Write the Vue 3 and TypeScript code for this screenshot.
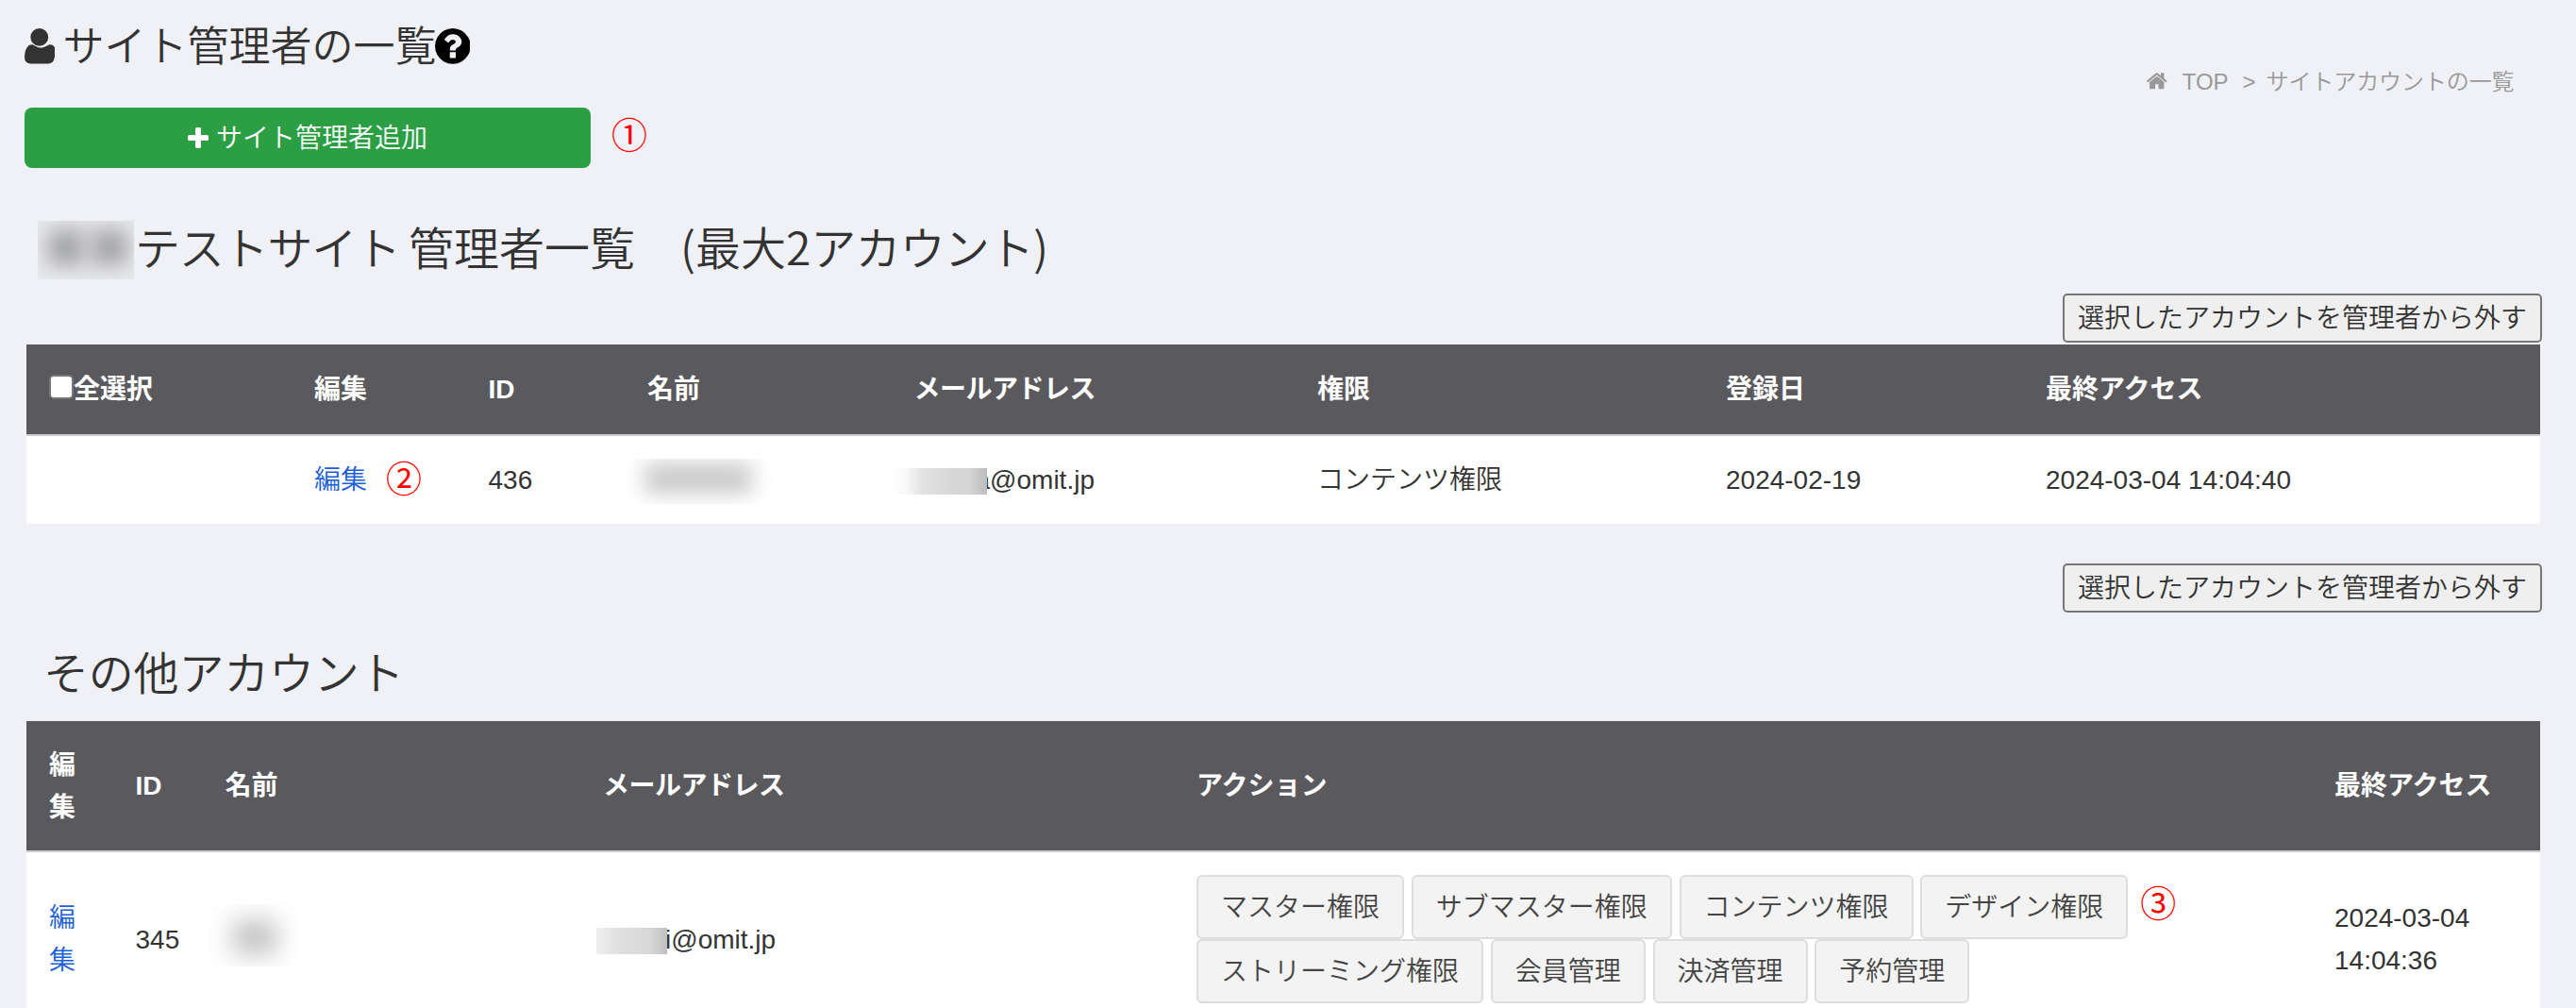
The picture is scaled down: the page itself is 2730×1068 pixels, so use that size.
<script setup lang="ts">
interface Account {
  id: number
  mailTail: string
  lastAccess: string
}

const adminHeads: string[] = ['編集', 'ID', '名前', 'メールアドレス', '権限', '登録日', '最終アクセス']
const adminCols: number[] = [281, 184.5, 168.5, 282.5, 427.5, 433, 339, 548]

const otherHeads: string[] = ['編集', 'ID', '名前', 'メールアドレス', 'アクション', '最終アクセス']
const otherCols: number[] = [91.5, 95, 400.5, 629, 1206, 242]

const admin: Account & { role: string; registered: string } = {
  id: 436,
  mailTail: 'a@omit.jp',
  role: 'コンテンツ権限',
  registered: '2024-02-19',
  lastAccess: '2024-03-04 14:04:40',
}

const other: Account = { id: 345, mailTail: 'i@omit.jp', lastAccess: '2024-03-04 14:04:36' }

const actionRows: string[][] = [
  ['マスター権限', 'サブマスター権限', 'コンテンツ権限', 'デザイン権限'],
  ['ストリーミング権限', '会員管理', '決済管理', '予約管理'],
]
</script>

<template>
  <main class="page">
    <header class="top">
      <h1 class="title">
        <svg class="ic-user" viewBox="0 0 1280 1536" aria-hidden="true">
          <path d="M1280 1271q0 120-73 189.500t-194 69.500h-746q-121 0-194-69.500t-73-189.500q0-53 3.500-103.500t14-109 26.500-108.500 43-97.500 62-81 85.500-53.500 111.500-20q9 0 42 21.500t74.500 48 108 48 133.500 21.500 133.500-21.500 108-48 74.500-48 42-21.500q61 0 111.500 20t85.500 53.500 62 81 43 97.500 26.500 108.500 14 109 3.500 103.500zM1024 384q0 159-112.500 271.500t-271.500 112.500-271.500-112.500-112.500-271.500 112.500-271.500 271.500-112.500 271.500 112.500 112.500 271.500z" />
        </svg>
        <span>サイト管理者の一覧</span>
        <svg class="ic-help" viewBox="0 0 1536 1536" aria-hidden="true">
          <path d="M896 1248v-192q0-14-9-23t-23-9h-192q-14 0-23 9t-9 23v192q0 14 9 23t23 9h192q14 0 23-9t9-23zM1152 576q0-88-55.500-163t-138.500-116-170-41q-243 0-371 213-15 24 8 42l132 100q7 6 19 6 16 0 25-12 53-68 86-92 34-24 86-24 48 0 85.500 26t37.500 59q0 38-20 61t-68 45q-63 28-115.500 86.500t-52.500 125.500v36q0 14 9 23t23 9h192q14 0 23-9t9-23q0-19 21.500-49.500t54.500-49.500q32-18 49-28.500t46-35 44.500-48 28-60.500 12.500-81zM1536 768q0 209-103 385.500t-279.500 279.500-385.500 103-385.500-103-279.500-279.500-103-385.500 103-385.500 279.500-279.500 385.500-103 385.500 103 279.500 279.500 103 385.500z" />
        </svg>
      </h1>
      <nav class="crumbs">
        <svg class="ic-home" viewBox="0 0 1612 1283" aria-hidden="true">
          <path d="M1382 739v480q0 26-19 45t-45 19h-384v-384h-256v384h-384q-26 0-45-19t-19-45v-480q0-1 .5-3t.5-3l575-474 575 474q1 2 1 6zM1605 670l-62 74q-8 9-21 11h-3q-13 0-21-7l-692-577-692 577q-12 8-24 7-13-2-21-11l-62-74q-8-10-7-23.500t11-21.500l719-599q32-26 76-26t76 26l244 204v-195q0-14 9-23t23-9h192q14 0 23 9t9 23v408l219 182q10 8 11 21.500t-7 23.500z" />
        </svg>
        <span class="crumb-top">TOP</span>
        <span class="crumb-sep">&gt;</span>
        <span>サイトアカウントの一覧</span>
      </nav>
    </header>

    <div class="add-row">
      <button class="add" type="button">
        <svg class="ic-plus" viewBox="0 0 1408 1408" aria-hidden="true">
          <path d="M1408 608v192q0 40-28 68t-68 28h-416v416q0 40-28 68t-68 28h-192q-40 0-68-28t-28-68v-416h-416q-40 0-68-28t-28-68v-192q0-40 28-68t68-28h416v-416q0-40 28-68t68-28h192q40 0 68 28t28 68v416h416q40 0 68 28t28 68z" />
        </svg>
        <span class="add-label">サイト管理者追加</span>
      </button>
      <span class="mark">①</span>
    </div>

    <h2 class="heading heading-admin">
      <span class="mask mask-site"></span>
      <span class="site-name">テストサイト</span>
      <span class="heading-text">管理者一覧　(最大2<span class="tight">アカウント</span>)</span>
    </h2>

    <div class="remove-row"><button class="remove" type="button">選択したアカウントを管理者から外す</button></div>

    <table class="grid">
      <colgroup><col v-for="(w, i) in adminCols" :key="i" :style="{ width: w + 'px' }" /></colgroup>
      <thead>
        <tr class="head-admin">
          <th><label class="check-all"><span class="box"></span>全選択</label></th>
          <th v-for="h in adminHeads" :key="h" :class="{ kana: h === 'メールアドレス' }">{{ h }}</th>
        </tr>
      </thead>
      <tbody>
        <tr class="row-admin">
          <td></td>
          <td><div class="edit-cell"><a>編集</a><span class="mark">②</span></div></td>
          <td>{{ admin.id }}</td>
          <td><span class="mask mask-name"></span></td>
          <td><div class="mail"><span class="mail-pad-a"></span>{{ admin.mailTail }}<span class="mask mask-mail-a"></span></div></td>
          <td>{{ admin.role }}</td>
          <td>{{ admin.registered }}</td>
          <td>{{ admin.lastAccess }}</td>
        </tr>
      </tbody>
    </table>

    <div class="remove-row second"><button class="remove" type="button">選択したアカウントを管理者から外す</button></div>

    <h2 class="heading heading-other"><span class="heading-text">その他アカウント</span></h2>

    <table class="grid">
      <colgroup><col v-for="(w, i) in otherCols" :key="i" :style="{ width: w + 'px' }" /></colgroup>
      <thead>
        <tr class="head-other">
          <th v-for="h in otherHeads" :key="h" :class="{ kana: h === 'メールアドレス' }">{{ h }}</th>
        </tr>
      </thead>
      <tbody>
        <tr class="row-other">
          <td><a>編集</a></td>
          <td>{{ other.id }}</td>
          <td><span class="mask mask-name-b"></span></td>
          <td><div class="mail"><span class="mail-pad-b"></span>{{ other.mailTail }}<span class="mask mask-mail-b"></span></div></td>
          <td class="actions-cell">
            <div v-for="(row, r) in actionRows" :key="r" class="actions">
              <button v-for="label in row" :key="label" class="act" type="button">{{ label }}</button>
              <span v-if="r === 0" class="mark mark-three">③</span>
            </div>
          </td>
          <td class="last">{{ other.lastAccess }}</td>
        </tr>
      </tbody>
    </table>
  </main>
</template>

<style>
body {
  background: #f0f1f6;
  overflow: hidden;
}
</style>

<style scoped>
.page {
  box-sizing: border-box;
  width: 2730px;
  height: 1068px;
  overflow: hidden;
  padding: 0 36px 0 26px;
  background: #f0f1f6;
  color: #333;
  font-family: "Liberation Sans", "Noto Sans CJK JP", sans-serif;
  font-size: 28px;
  font-weight: 350;
  line-height: 44.8px;
}
svg {
  display: block;
  fill: currentColor;
  flex: none;
}
button {
  font-family: inherit;
  font-size: 28px;
  font-weight: inherit;
  margin: 0;
  box-sizing: border-box;
  white-space: nowrap;
}
.top {
  display: flex;
  justify-content: space-between;
  height: 114px;
}
.title {
  display: flex;
  align-items: center;
  height: 98px;
  margin: 0;
  font-family: "Noto Sans CJK JP", sans-serif;
  font-size: 44px;
  font-weight: 350;
  line-height: 64px;
}
.title span {
  margin-left: 9px;
  margin-right: -2px;
  padding-bottom: 6px;
}
.ic-user {
  width: 31.500px;
  height: 37.700px;
}
.ic-help {
  width: 37.700px;
  height: 37.700px;
  color: #000;
}
.crumbs {
  display: flex;
  align-items: center;
  height: 172px;
  margin-right: 29.500px;
  font-size: 24px;
  line-height: 36px;
  color: #999;
}
.crumbs > span {
  padding-top: 1px;
}
.crumbs > span:last-child {
  letter-spacing: -0.100px;
}
.ic-home {
  width: 21.500px;
  height: 17.500px;
  margin-right: 16px;
}
.crumb-top {
  margin-right: 15px;
}
.crumb-sep {
  margin-right: 11px;
}
.add-row {
  display: flex;
  align-items: center;
  height: 64px;
}
.add {
  display: flex;
  align-items: center;
  justify-content: center;
  width: 600px;
  height: 64px;
  padding: 0;
  border: 0;
  border-radius: 8px;
  background: #2c9f45;
  color: #fff;
}
.add-label {
  padding-bottom: 4px;
}
.ic-plus {
  width: 22px;
  height: 22px;
  margin-right: 8px;
}
.mark {
  color: #f00;
  font-family: "Noto Sans CJK JP", sans-serif;
  font-size: 38px;
  font-weight: 400;
  line-height: 40px;
}
.add-row .mark {
  margin-left: 22px;
  margin-top: -10px;
}
.heading {
  display: flex;
  align-items: center;
  margin: 0;
  font-family: "Noto Sans CJK JP", sans-serif;
  font-size: 48px;
  font-weight: 350;
  line-height: 64px;
}
.heading-text {
  padding-bottom: 8px;
}
.heading-admin {
  height: 62px;
  margin: 56px 0 15px 14px;
}
.heading-admin .heading-text,
.heading-admin .site-name {
  padding-bottom: 10px;
}
.site-name {
  width: 290px;
  margin-left: 1px;
  letter-spacing: -1.200px;
  white-space: nowrap;
}
.tight {
  letter-spacing: -0.800px;
}
.heading-other {
  height: 64px;
  margin: 33px 0 18px 20px;
  letter-spacing: -0.200px;
}
.mask {
  display: block;
  flex: none;
  overflow: hidden;
}
.mask-site {
  position: relative;
  width: 102px;
  height: 62px;
  background: #e9eaee;
}
.mask-site::before,
.mask-site::after {
  content: "";
  position: absolute;
  top: 9px;
  width: 38px;
  height: 38px;
  background: #a2a3a5;
  filter: blur(11px);
}
.mask-site::before {
  left: 11px;
}
.mask-site::after {
  left: 57px;
}
.remove-row {
  display: flex;
  justify-content: flex-end;
  height: 54px;
}
.remove-row.second {
  padding-top: 42px;
  height: 52px;
}
.remove {
  width: 508px;
  height: 52px;
  padding: 0;
  border: 2px solid #767676;
  border-radius: 5px;
  background: #efefef;
  color: #333;
  line-height: 47px;
}
.grid {
  width: 2664px;
  margin-left: 2px;
  table-layout: fixed;
  border-collapse: separate;
  border-spacing: 0;
  background: #fff;
}
.grid th,
.grid td {
  box-sizing: border-box;
  padding: 2px 24px 0;
  text-align: left;
  vertical-align: middle;
}
.grid th {
  background: #5a595e;
  color: #fff;
  font-weight: 700;
  border-bottom: 2px solid #ccc;
}
.grid th.kana {
  letter-spacing: -0.500px;
}
.grid td.actions-cell {
  padding-top: 0;
}
.head-admin th {
  height: 97px;
}
.row-admin td {
  height: 93px;
}
.head-other th {
  height: 139px;
}
.row-other td {
  height: 184px;
}
.grid a {
  color: #1b5fd9;
}
.check-all {
  display: flex;
  align-items: center;
}
.box {
  box-sizing: border-box;
  width: 26px;
  height: 26px;
  margin: -6px 0 0;
  border: 2px solid #767676;
  border-radius: 5px;
  background: #fff;
}
.edit-cell {
  display: flex;
  align-items: center;
}
.edit-cell .mark {
  margin-left: 20px;
  margin-top: -9px;
}
.mask-name {
  width: 158px;
  height: 48px;
  margin: 1px 0 0 -24px;
}
.mask-name::before {
  content: "";
  display: block;
  width: 114px;
  height: 32px;
  margin: 5px 0 0 21px;
  background: #c9c9c9;
  filter: blur(11px);
}
.mask-name-b {
  width: 94px;
  height: 66px;
  margin: -10px 0 0 -17px;
}
.mask-name-b::before {
  content: "";
  display: block;
  width: 46px;
  height: 34px;
  margin: 18px 0 0 25px;
  background: #bcbcbc;
  filter: blur(14px);
}
.mail {
  position: relative;
  display: flex;
  align-items: center;
  white-space: nowrap;
}
.mail-pad-a {
  width: 65px;
}
.mail-pad-b {
  width: 66px;
}
.mask-mail-a {
  position: absolute;
  left: -24px;
  top: 9px;
  width: 101.500px;
  height: 28px;
  background: linear-gradient(90deg, #fff 0%, #f8f8f8 16%, #e2e2e2 32%, #d8d8d8 60%, #d4d4d4 82%, #bdbdbd 100%);
}
.mask-mail-b {
  position: absolute;
  left: -7px;
  top: 9px;
  width: 75px;
  height: 28px;
  background: linear-gradient(90deg, #f0f0f0 0%, #dedede 35%, #d8d8d8 75%, #bfbfbf 100%);
}
.actions {
  display: flex;
  align-items: center;
  gap: 7.780px;
  height: 68px;
}
.act {
  height: 68px;
  padding: 0 24px 4px;
  border: 2px solid #ddd;
  border-radius: 6px;
  background: #f3f3f3;
  color: #444;
}
.mark-three {
  margin-left: 5px;
  margin-top: -13px;
}
</style>
